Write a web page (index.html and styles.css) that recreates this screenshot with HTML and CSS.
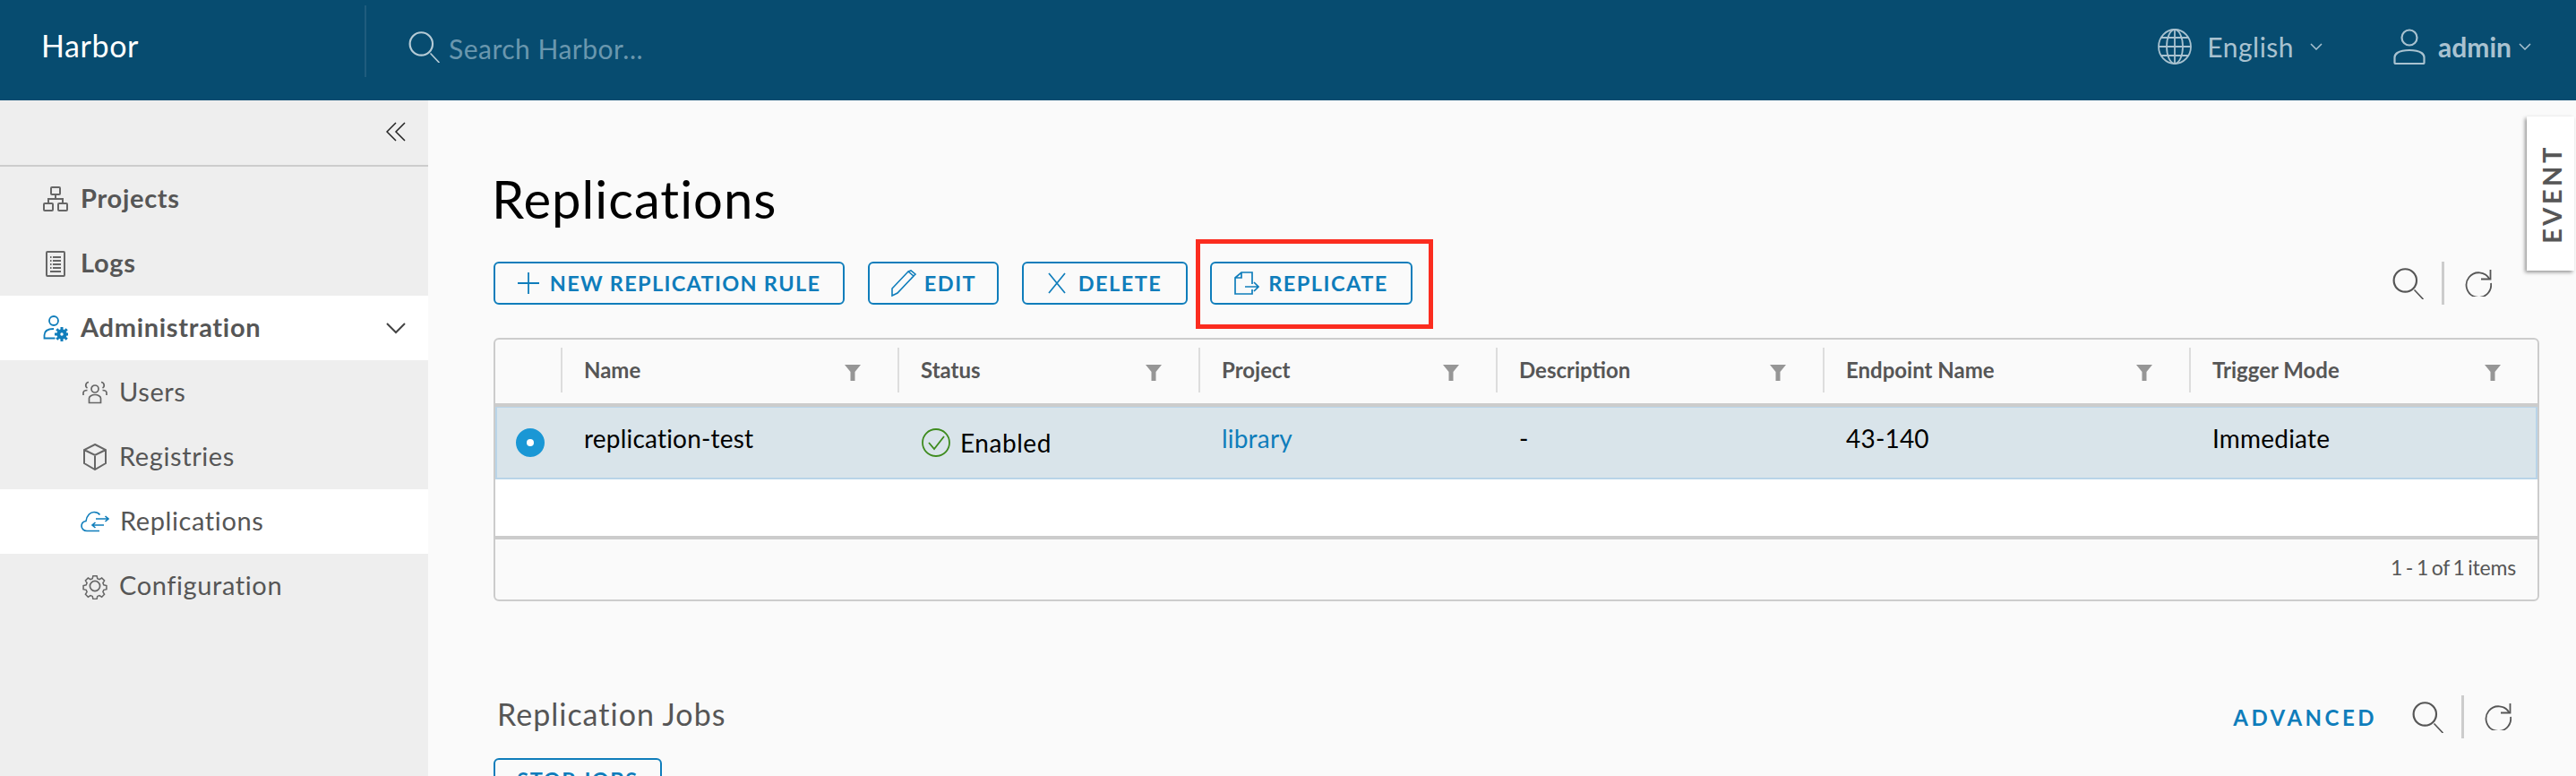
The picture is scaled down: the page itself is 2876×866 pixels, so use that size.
FILE: index.html
```html
<!DOCTYPE html>
<html lang="en">
<head>
<meta charset="utf-8">
<title>Harbor - Replications</title>
<link rel="stylesheet" href="styles.css">
</head>
<body>
<svg class="defs" width="0" height="0" aria-hidden="true">
  <symbol id="i-search" viewBox="0 0 36 36"><path d="M16.33 5.05A10.95 10.95 0 1 1 5.39 16a11 11 0 0 1 10.94-10.95m0-2.05a13 13 0 1 0 13 13 13 13 0 0 0-13-13Z" fill="currentColor" transform="translate(-3 -2) scale(1.06)"/><path d="M25 26l9 9.500" fill="none" stroke="currentColor" stroke-width="1.700" stroke-linecap="round"/></symbol>
  <symbol id="i-refresh" viewBox="0 0 30 30"><path d="M27.500 10.500A13.800 13.800 0 1 0 29 15" fill="none" stroke="currentColor" stroke-width="1.800"/><path d="M18 10.500h10.500V0" fill="none" stroke="currentColor" stroke-width="1.800"/></symbol>
  <symbol id="i-filter" viewBox="0 0 18 20"><path d="M0 1h18l-6.500 8v10h-5V9Z" fill="#969696"/></symbol>
</svg>

<header class="topbar">
  <div class="brand">Harbor</div>
  <div class="global-search">
    <svg class="icon-36" viewBox="0 0 36 36"><use href="#i-search"/></svg>
    <span>Search Harbor...</span>
  </div>
  <div class="lang">
    <svg class="icon-globe" viewBox="0 0 38 40" fill="none" stroke="currentColor" stroke-width="1.800">
      <ellipse cx="19" cy="20" rx="18" ry="19"/><ellipse cx="19" cy="20" rx="9" ry="19"/><path d="M19 1v38M3 10h32M1 20h36M3 30h32"/>
    </svg>
    <span>English</span>
    <svg class="caret" viewBox="0 0 14 8" fill="none" stroke="currentColor" stroke-width="1.500"><path d="M1 1l6 6 6-6"/></svg>
  </div>
  <div class="user">
    <svg class="icon-user" viewBox="0 0 36 40" fill="none" stroke="currentColor" stroke-width="2.200">
      <circle cx="18" cy="10" r="8.500"/><path d="M1.500 38v-6c0-2 1-3.500 3-5 4-2.500 9-3 13.500-3s9.500.5 13.500 3c2 1.500 3 3 3 5v6a1 1 0 0 1-1 1H2.500a1 1 0 0 1-1-1Z"/>
    </svg>
    <span>admin</span>
    <svg class="caret" viewBox="0 0 14 8" fill="none" stroke="currentColor" stroke-width="1.500"><path d="M1 1l6 6 6-6"/></svg>
  </div>
</header>

<div class="layout">
  <nav class="sidebar">
    <div class="collapse">
      <svg class="collapse-icon" viewBox="0 0 22 22" fill="none" stroke="#222" stroke-width="1.500"><path d="M11 1L1 11l10 10M21 1L11 11l10 10"/></svg>
    </div>
    <a class="nav-item">
      <svg class="nav-icon" viewBox="0 0 28 28" fill="none" stroke="#666" stroke-width="2"><rect x="9" y="1" width="10" height="8" rx="1"/><rect x="1" y="19" width="10" height="8" rx="1"/><rect x="17" y="19" width="10" height="8" rx="1"/><path d="M14 9v5M6 19v-5h16v5"/></svg>
      <span>Projects</span>
    </a>
    <a class="nav-item">
      <svg class="nav-icon" viewBox="0 0 28 30" fill="none" stroke="#666" stroke-width="2"><rect x="4" y="2" width="20" height="27" rx="1"/><path d="M8 8h1.500M11 8h9M8 12h1.500M11 12h9M8 16h1.500M11 16h9M8 20h1.500M11 20h9M8 24h12"/></svg>
      <span>Logs</span>
    </a>
    <a class="nav-item is-open">
      <svg class="nav-icon" viewBox="0 0 28 28" fill="none" stroke="#0f7dbb" stroke-width="1.800"><circle cx="12" cy="6" r="5"/><path d="M12 15c-6 0-10.500 2-10.500 7v3.500h12"/><circle cx="21" cy="21" r="3.700" stroke-width="4"/><path d="M21 13v3M21 26v3M13 21h3M26 21h3M15.300 15.300l2 2M24.700 24.700l2 2M15.300 26.700l2-2M24.700 17.300l2-2" stroke-width="3"/></svg>
      <span>Administration</span>
      <svg class="nav-chevron" viewBox="0 0 22 13" fill="none" stroke="#444" stroke-width="2"><path d="M1 1l10 10L21 1"/></svg>
    </a>
    <a class="nav-sub">
      <svg class="nav-icon" viewBox="0 0 28 26" fill="none" stroke="#666" stroke-width="1.700"><circle cx="14" cy="9" r="4"/><path d="M7.500 24.500v-5c0-2 3-4 6.500-4s6.500 2 6.500 4v5ZM7 1.500a3.500 3.500 0 0 0-1.500 6.500M21 1.500a3.500 3.500 0 0 1 1.500 6.500M1 16v-2.500c0-2 2-3 4.500-3M27 16v-2.500c0-2-2-3-4.500-3"/></svg>
      <span>Users</span>
    </a>
    <a class="nav-sub">
      <svg class="nav-icon" viewBox="0 0 28 30" fill="none" stroke="#666" stroke-width="2"><path d="M14 1l12 6v15l-12 7-12-7V7ZM2 7l12 6 12-6M14 13v16"/></svg>
      <span>Registries</span>
    </a>
    <a class="nav-sub is-active">
      <svg class="nav-icon-wide" viewBox="0 0 32 24" fill="none" stroke="#0f7dbb" stroke-width="1.600"><path d="M21 22.500H7C3.500 22.500 1 20 1 17c0-3 2-5 5-5.500C7 5 11 1.500 15 1.500c3 0 5 1 6.500 3"/><path d="M17 9h14M27.500 6l3.500 3-3.500 3M13 16h13M16.500 13L13 16l3.500 3"/></svg>
      <span>Replications</span>
    </a>
    <a class="nav-sub">
      <svg class="nav-icon" viewBox="0 0 30 30" fill="none" stroke="#666" stroke-width="1.800"><circle cx="15" cy="15" r="6"/><path d="M12.500 1.500h5l.8 3.700 2.600 1.100 3.200-2 3.500 3.500-2 3.200 1.100 2.600 3.700.8v5l-3.700.8-1.100 2.600 2 3.200-3.500 3.500-3.200-2-2.600 1.100-.8 3.700h-5l-.8-3.700-2.600-1.100-3.200 2-3.500-3.500 2-3.200-1.100-2.600-3.700-.8v-5l3.700-.8 1.100-2.600-2-3.200 3.500-3.500 3.200 2 2.600-1.100Z" transform="translate(1.500 1.500) scale(.9)"/></svg>
      <span>Configuration</span>
    </a>
  </nav>

  <main class="content">
    <h1 class="page-title">Replications</h1>

    <div class="toolbar">
      <button class="btn btn-new">
        <svg class="btn-icon-plus" viewBox="0 0 24 24" fill="none" stroke="currentColor" stroke-width="1.800"><path d="M12 0v24M0 12h24"/></svg>
        NEW REPLICATION RULE
      </button>
      <button class="btn btn-edit">
        <svg class="btn-icon-edit" viewBox="0 0 30 30" fill="none" stroke="currentColor" stroke-width="1.600"><path d="M2 21L20 2l6 5L8 26l-6 3ZM20 2l3-1 5 4-2 2"/></svg>
        EDIT
      </button>
      <button class="btn btn-delete">
        <svg class="btn-icon-x" viewBox="0 0 20 24" fill="none" stroke="currentColor" stroke-width="1.700"><path d="M1 1l18 22M19 1L1 23"/></svg>
        DELETE
      </button>
      <button class="btn btn-replicate">
        <svg class="btn-icon-rep" viewBox="0 0 28 26" fill="none" stroke="currentColor" stroke-width="1.700"><path d="M20 14V1H8L1 7v18h19v-5M8 1v6H1M12 17h15M22 12l5 5-5 5"/></svg>
        REPLICATE
      </button>
      <div class="tools">
        <svg class="tool-search" viewBox="0 0 36 36"><use href="#i-search"/></svg>
        <span class="tool-sep"></span>
        <svg class="tool-refresh" viewBox="0 0 30 30"><use href="#i-refresh"/></svg>
      </div>
    </div>

    <section class="grid">
      <div class="grid-row grid-head">
        <div class="cell"></div>
        <div class="cell">Name<svg class="filter"><use href="#i-filter"/></svg></div>
        <div class="cell">Status<svg class="filter"><use href="#i-filter"/></svg></div>
        <div class="cell">Project<svg class="filter"><use href="#i-filter"/></svg></div>
        <div class="cell">Description<svg class="filter"><use href="#i-filter"/></svg></div>
        <div class="cell">Endpoint Name<svg class="filter"><use href="#i-filter"/></svg></div>
        <div class="cell">Trigger Mode<svg class="filter"><use href="#i-filter"/></svg></div>
      </div>
      <div class="grid-row grid-selected">
        <div class="cell cell-radio"><span class="radio"></span></div>
        <div class="cell">replication-test</div>
        <div class="cell cell-status">
          <svg class="status-ok" viewBox="0 0 32 32" fill="none" stroke="#3e8b1e" stroke-width="1.800"><circle cx="16" cy="16" r="15"/><path d="M8 16l6 7L25 9"/></svg>
          Enabled
        </div>
        <div class="cell cell-link">library</div>
        <div class="cell">-</div>
        <div class="cell">43-140</div>
        <div class="cell">Immediate</div>
      </div>
      <div class="grid-blank"></div>
      <div class="grid-foot">1 - 1 of 1 items</div>
    </section>

    <div class="jobs-head">
      <h2 class="jobs-title">Replication Jobs</h2>
      <a class="advanced">ADVANCED</a>
      <svg class="tool-search" viewBox="0 0 36 36"><use href="#i-search"/></svg>
      <span class="tool-sep"></span>
      <svg class="tool-refresh" viewBox="0 0 30 30"><use href="#i-refresh"/></svg>
    </div>
    <button class="btn btn-stop">STOP JOBS</button>
  </main>
</div>

<div class="event-tab"><span>EVENT</span></div>
<div class="callout"></div>
</body>
</html>
```
FILE: styles.css
```css
* { box-sizing: border-box; }
html, body { margin: 0; height: 866px; overflow: hidden; }
body { font-family: Lato, "Open Sans", sans-serif; color: #565656; background: #fafafa; position: relative; }
.defs { position: absolute; }
svg { display: block; flex: none; }

.topbar { height: 112px; background: #074c70; display: flex; align-items: center; color: #a9c2d0; }
.brand { width: 407px; padding: 0 0 12px 46px; color: #fff; font-size: 34px; letter-spacing: .6px; }
.global-search { height: 80px; margin-bottom: 20px; border-left: 2px solid #1f5c7d; flex: 1; display: flex; align-items: center; padding: 16px 0 0 47px; color: #b6cbd6; }
.global-search span { margin-left: 9px; font-size: 30px; color: #6a97ae; letter-spacing: .5px; }
.icon-36 { width: 36px; height: 36px; margin-top: -4px; }
.lang, .user { display: flex; align-items: center; font-size: 30px; padding-bottom: 8px; }
.lang { margin-right: 79px; letter-spacing: .5px; }
.user { margin-right: 50px; font-weight: 700; }
.icon-globe { width: 38px; height: 40px; margin-right: 17px; }
.icon-user { width: 36px; height: 40px; margin-right: 14px; }
.caret { width: 14px; height: 8px; margin-left: 18px; }
.user .caret { margin-left: 8px; }

.layout { display: flex; height: 754px; }
.sidebar { width: 478px; background: #eee; flex: none; }
.collapse { height: 74px; border-bottom: 2px solid #ccc; display: flex; justify-content: flex-end; align-items: center; padding: 0 25px 3px 0; }
.collapse-icon { width: 22px; height: 22px; }
.nav-item, .nav-sub { height: 72px; display: flex; align-items: center; font-size: 29px; color: #565656; }
.nav-item span, .nav-sub span { margin-top: -3px; }
.nav-item { padding-left: 48px; font-weight: 700; letter-spacing: .7px; }
.nav-sub { padding-left: 92px; letter-spacing: .6px; }
.nav-item svg.nav-icon { margin-right: 14px; }
.nav-sub svg.nav-icon { margin-right: 13px; }
.nav-icon { width: 28px; height: 30px; }
.nav-icon-wide { width: 32px; height: 24px; margin: 0 12px 0 -2px; }
.is-open, .is-active { background: #fff; }
.nav-chevron { width: 22px; height: 13px; margin-left: auto; margin-right: 25px; }

.content { flex: 1; padding: 0 41px 0 73px; min-width: 0; position: relative; }
.page-title { margin: 74px 0 0 -2px; height: 106px; font-weight: 400; font-size: 58px; line-height: 72px; color: #000; letter-spacing: 1px; }

.toolbar { display: flex; align-items: center; height: 48px; }
.btn { height: 48px; padding: 0; background: transparent; border: 2px solid #0f7dbb; border-radius: 6px; color: #0f7dbb; font: 700 23.500px Lato, sans-serif; letter-spacing: 1.500px; display: flex; align-items: center; justify-content: center; }
.toolbar .btn { width: 392px; margin-right: 26px; }
.toolbar .btn-new { letter-spacing: 1.300px; }
.toolbar .btn-edit { width: 146px; }
.toolbar .btn-delete { width: 185px; }
.toolbar .btn-replicate { width: 226px; margin-right: 0; margin-left: -1px; }
.btn-icon-plus { width: 24px; height: 24px; margin-right: 12px; }
.btn-icon-edit { width: 30px; height: 30px; margin-right: 8px; }
.btn-icon-x { width: 20px; height: 24px; margin-right: 14px; }
.btn-icon-rep { width: 28px; height: 26px; margin-right: 10px; }

.tools { margin-left: auto; margin-right: 53px; display: flex; align-items: center; }
.tool-search { width: 36px; height: 36px; color: #565656; }
.tool-sep { width: 3px; height: 48px; background: #ccc; margin: 0 23px 0 19px; flex: none; }
.tool-refresh { width: 30px; height: 30px; color: #565656; }

.grid { margin-top: 37px; height: 294px; border: 2px solid #ccc; border-radius: 6px; overflow: hidden; background: #fafafa; }
.grid-row { display: grid; grid-template-columns: 73px 376px 336px 332px 365px 409px 1fr; }
.grid-head { height: 75px; border-bottom: 4px solid #ccc; align-items: center; font-size: 24px; font-weight: 700; padding-bottom: 4px; }
.grid-head .cell { height: 50px; border-left: 2px solid #ddd; display: flex; align-items: center; justify-content: space-between; padding: 0 41px 0 24px; }
.grid-head .cell:first-child { border-left: 0; }
.filter { width: 18px; height: 20px; margin-top: 6px; }
.grid-selected { height: 81px; background: #d9e4ea; border: 1px solid #b9d4e8; border-width: 1px 2px 2px; align-items: center; font-size: 28px; color: #000; letter-spacing: .2px; }
.grid-selected .cell { padding-left: 24px; padding-bottom: 11px; }
.grid-selected .cell.cell-radio { padding: 0 0 0 21px; }
.radio { display: block; width: 32px; height: 32px; border-radius: 50%; background: #1a97d5; border: 12px solid #1a97d5; }
.radio::after { content: ""; display: block; width: 8px; height: 8px; border-radius: 50%; background: #fff; }
.grid-selected .cell.cell-status { display: flex; align-items: center; padding-bottom: 0; padding-left: 25px; letter-spacing: .55px; }
.status-ok { width: 32px; height: 32px; margin-right: 11px; }
.cell-link { color: #0f7dbb; }
.grid-blank { height: 67px; background: #fff; border-bottom: 4px solid #ccc; }
.grid-foot { text-align: right; padding: 17px 24px 0 0; font-size: 23px; color: #565656; word-spacing: -2px; letter-spacing: -.2px; }

.jobs-head { display: flex; align-items: center; height: 48px; margin-top: 105px; padding-right: 31px; }
.jobs-title { margin: 0 auto 8px 4px; font-weight: 400; font-size: 34px; color: #565656; letter-spacing: 1px; }
.advanced { font-weight: 700; font-size: 24px; color: #0f7dbb; letter-spacing: 3.500px; margin-right: 39px; }
.btn-stop { margin-top: 22px; width: 188px; }

.event-tab { position: absolute; right: 2px; top: 130px; width: 53px; height: 172px; background: #fff; box-shadow: -2px 2px 4px rgba(0,0,0,.4); display: flex; align-items: center; justify-content: center; }
.event-tab span { transform: rotate(-90deg); font-size: 29px; font-weight: 700; letter-spacing: 3.500px; color: #565656; white-space: nowrap; margin-left: 2px; }
.callout { position: absolute; left: 1335px; top: 267px; width: 265px; height: 100px; border: 5px solid #fb2c1f; }
```
